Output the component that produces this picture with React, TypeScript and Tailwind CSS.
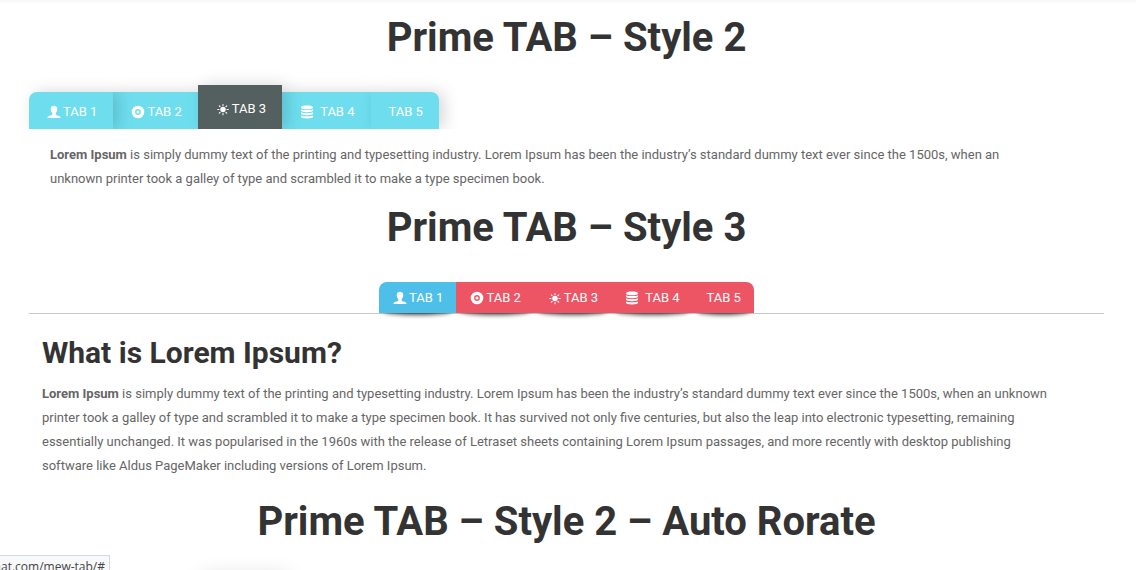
import React, { useState } from "react";

type IconName = "user" | "record" | "sun" | "stack";

function Icon({ name }: { name: IconName }) {
  if (name === "user")
    return (
      <svg viewBox="0 0 14 14" className="h-3.5 w-3.5" fill="currentColor" aria-hidden="true">
        <path d="M7 .8C4.900.8 3.700 2.100 3.700 4c0 1.700.7 3.200 1.600 4.100v1.500c-.2.500-1.200.8-2.500 1.200C1.200 11.200.400 11.800.400 13h13.200c0-1.200-.8-1.800-2.400-2.200-1.300-.4-2.300-.7-2.500-1.200V8.100c.9-.9 1.600-2.400 1.600-4.100C10.300 2.100 9.100.8 7 .8z" />
      </svg>
    );
  if (name === "record")
    return (
      <svg viewBox="0 0 14 14" className="h-3.5 w-3.5" fill="none" stroke="currentColor" aria-hidden="true">
        <circle cx="7" cy="7" r="4.600" strokeWidth="3.400" />
        <circle cx="7" cy="7" r="1.500" fill="currentColor" stroke="none" />
      </svg>
    );
  if (name === "sun")
    return (
      <svg viewBox="0 0 14 14" className="h-3.5 w-3.5" stroke="currentColor" strokeLinecap="round" aria-hidden="true">
        <circle cx="7" cy="7.500" r="2.700" fill="currentColor" stroke="none" />
        <path
          strokeWidth="1.100"
          d="M7 2.500v1M7 11.500v1.200M1.700 7.500h1.300M11 7.500h1.300M3.300 3.800l.8.8M9.900 10.400l.8.8M3.300 11.200l.8-.8M9.900 4.600l.8-.8"
        />
      </svg>
    );
  return (
    <svg viewBox="0 0 14 14" className="h-3.5 w-3.5" fill="currentColor" aria-hidden="true">
      <path d="M1 2.400C1 1.200 3.500.6 7 .6s6 .6 6 1.800S10.500 4.200 7 4.200 1 3.600 1 2.400z" />
      <path d="M1 4.200c1.500.7 3.500.9 6 .9s4.500-.2 6-.9v1.300c0 1.200-2.500 1.700-6 1.700s-6-.5-6-1.700z" />
      <path d="M1 7.300c1.500.7 3.500.9 6 .9s4.500-.2 6-.9v1.300c0 1.200-2.500 1.700-6 1.700s-6-.5-6-1.700z" />
      <path d="M1 10.400c1.500.7 3.500.9 6 .9s4.500-.2 6-.9v1.300c0 1.200-2.500 1.700-6 1.700s-6-.5-6-1.700z" />
    </svg>
  );
}

const tabs: { label: string; icon?: IconName; gap: string }[] = [
  { label: "TAB 1", icon: "user", gap: "gap-0.5" },
  { label: "TAB 2", icon: "record", gap: "gap-0.5" },
  { label: "TAB 3", icon: "sun", gap: "gap-0.5" },
  { label: "TAB 4", icon: "stack", gap: "gap-1.5" },
  { label: "TAB 5", gap: "gap-0" },
];

const corner = (i: number) => (i === 0 ? "rounded-tl-lg" : i === tabs.length - 1 ? "rounded-tr-lg" : "");

function RaisedTabs() {
  const [active, setActive] = useState(2);
  const layers = ["z-10", "z-0", "z-10", "z-0", "z-0"];
  return (
    <div role="tablist" className="isolate -mx-5 flex items-end overflow-hidden px-5 pt-5">
      {tabs.map((t, i) => (
        <button
          key={t.label}
          role="tab"
          aria-selected={i === active}
          onClick={() => setActive(i)}
          className={`relative flex items-center pr-4 pl-[18px] text-[13px] text-white shadow-[5px_0_16px_rgba(0,0,0,0.16)] ${t.gap} ${layers[i]} ${
            i === active ? "h-11 bg-[#545f5f] pt-1" : `h-[37px] bg-[#6edeef] pt-0.5 ${corner(i)}`
          }`}
        >
          {t.icon && <Icon name={t.icon} />}
          {t.label}
        </button>
      ))}
    </div>
  );
}

function CenteredTabs() {
  const [active, setActive] = useState(0);
  return (
    <div role="tablist" className="isolate flex justify-center border-b border-[#c8c8c8]">
      {tabs.map((t, i) => (
        <button
          key={t.label}
          role="tab"
          aria-selected={i === active}
          onClick={() => setActive(i)}
          className="relative text-[13px] text-white"
        >
          <span className="absolute inset-x-1 bottom-0 -z-10 h-2 rounded-[50%] shadow-[0_2px_4px_rgba(0,0,0,0.7)]" />
          <span
            className={`flex h-[31px] items-center pr-[13px] pl-3.5 ${t.gap} ${
              i === active ? "bg-[#4dbfe8]" : "bg-[#ed5564]"
            } ${corner(i)}`}
          >
            {t.icon && <Icon name={t.icon} />}
            {t.label}
          </span>
        </button>
      ))}
    </div>
  );
}

function Title({ children }: { children: React.ReactNode }) {
  return <h1 className="text-center text-[40px] leading-[44px] font-bold text-[#333]">{children}</h1>;
}

export default function App() {
  return (
    <div className="h-screen overflow-hidden bg-white font-['Roboto','Liberation_Sans',sans-serif] text-[13px] leading-6 text-[#666]">
      <div className="h-1 bg-linear-to-b from-[#f6f6f6] to-white" />
      <main className="pt-3 pr-8 pl-[29px]">
        <Title>Prime TAB – Style 2</Title>
        <div className="pt-[5px]">
          <RaisedTabs />
        </div>
        <p className="pt-3.5 pr-14 pb-[15px] pl-[21px]">
          <strong>Lorem Ipsum</strong> is simply dummy text of the printing and typesetting industry. Lorem Ipsum has
          been the industry’s standard dummy text ever since the 1500s, when an unknown printer took a galley of type
          and scrambled it to make a type specimen book.
        </p>
        <Title>Prime TAB – Style 3</Title>
        <div className="pt-8">
          <CenteredTabs />
        </div>
        <section className="pt-[22px] pr-12 pb-[22px] pl-[13px]">
          <h2 className="text-[30px] leading-[33px] font-bold text-[#333]">What is Lorem Ipsum?</h2>
          <p className="pt-[13px]">
            <strong>Lorem Ipsum</strong> is simply dummy text of the printing and typesetting industry. Lorem Ipsum has
            been the industry’s standard dummy text ever since the 1500s, when an unknown printer took a galley of type
            and scrambled it to make a type specimen book. It has survived not only five centuries, but also the leap
            into electronic typesetting, remaining essentially unchanged. It was popularised in the 1960s with the
            release of Letraset sheets containing Lorem Ipsum passages, and more recently with desktop publishing
            software like Aldus PageMaker including versions of Lorem Ipsum.
          </p>
        </section>
        <Title>Prime TAB – Style 2 – Auto Rorate</Title>
      </main>
      <div className="fixed -bottom-2 left-0 flex h-[23px] w-[110px] items-center justify-end overflow-hidden border-t border-r border-[#d5d8dc] bg-[#f8f9fa] pr-1 font-['Open_Sans',sans-serif] text-xs whitespace-nowrap text-[#444]">
        hat.com/mew-tab/#
      </div>
      <div className="fixed -bottom-4 left-[198px] h-2 w-[85px] shadow-[5px_0_20px_rgba(0,0,0,0.25)]" />
    </div>
  );
}
